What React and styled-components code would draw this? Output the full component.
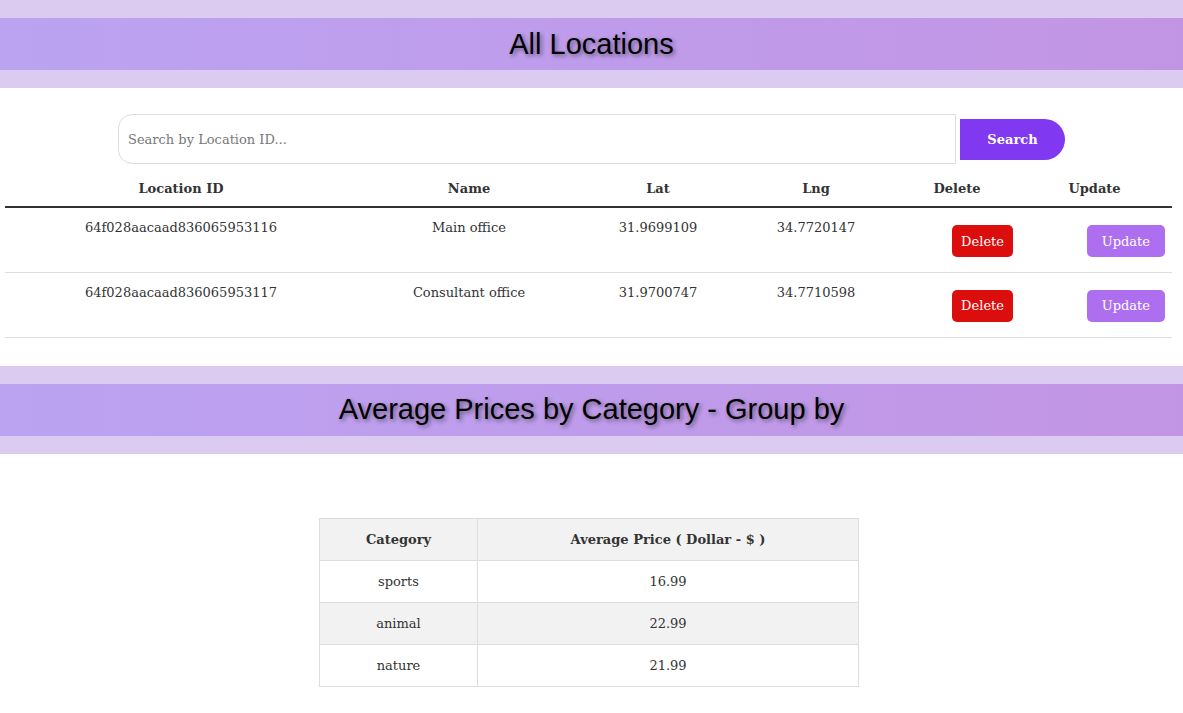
import React, { useState } from 'react';
import styled, { createGlobalStyle } from 'styled-components';

const GlobalStyle = createGlobalStyle`
  body {
    margin: 0;
    background: #fff;
    font-family: "DejaVu Serif", "Liberation Serif", serif;
    color: #333;
  }
`;

const SectionBand = styled.div`
  background: #dccbf0;
  padding: 18px 0;
`;

const SectionTitle = styled.h1`
  margin: 0;
  height: 52px;
  display: flex;
  align-items: center;
  justify-content: center;
  background: linear-gradient(90deg, #bba3f2 0%, #c295e4 100%);
  font-family: "Liberation Sans", Arial, sans-serif;
  font-weight: 400;
  font-size: 29px;
  color: #000;
  text-shadow: 2px 2px 4px rgba(0, 0, 0, 0.45);
`;

const SearchRow = styled.div`
  display: flex;
  align-items: center;
  justify-content: center;
  padding: 26px 0 10px 0;
  gap: 4px;
`;

const SearchInput = styled.input`
  width: 838px;
  height: 50px;
  box-sizing: border-box;
  border: 1px solid #ddd;
  border-radius: 14px 0 0 14px;
  padding: 0 9px;
  font-family: "DejaVu Serif", serif;
  font-size: 13px;
  color: #333;
  outline: none;

  &::placeholder {
    color: #777;
  }
`;

const SearchButton = styled.button`
  width: 105px;
  height: 41px;
  border: none;
  border-radius: 0 21px 21px 0;
  background: #8038f0;
  color: #fff;
  font-family: "DejaVu Serif", serif;
  font-weight: 700;
  font-size: 13px;
  cursor: pointer;
`;

const LocTable = styled.table`
  width: 1167px;
  margin: 0 0 28px 5px;
  border-collapse: collapse;
  font-size: 13px;
`;

const HeadCell = styled.th`
  font-weight: 700;
  padding: 7px 0 10px 0;
  border-bottom: 2px solid #333;
  text-align: center;
  width: ${p => p.$w}px;
`;

const Row = styled.tr`
  border-bottom: 1px solid #ddd;
`;

const Cell = styled.td`
  height: 65px;
  box-sizing: border-box;
  vertical-align: top;
  text-align: ${p => p.$align || 'center'};
  padding: 12px ${p => p.$pr || 0}px 0 0;
`;

const ActionButton = styled.button`
  margin-top: 5px;
  height: 32px;
  padding: 0 ${p => p.$px}px;
  border: none;
  border-radius: 5px;
  background: ${p => p.$bg};
  color: #fff;
  font-family: "DejaVu Serif", serif;
  font-size: 13px;
  cursor: pointer;
`;

const PriceWrap = styled.div`
  display: flex;
  justify-content: center;
  padding: 64px 5px 26px 0;
`;

const PriceTable = styled.table`
  width: 540px;
  border-collapse: collapse;
  font-size: 13px;
`;

const PriceTh = styled.th`
  height: 41px;
  padding: 0;
  border: 1px solid #ddd;
  background: #f2f2f2;
  font-weight: 700;
  width: ${p => p.$w}px;
`;

const PriceRow = styled.tr`
  background: ${p => (p.$alt ? '#f2f2f2' : '#fff')};
`;

const PriceTd = styled.td`
  height: 41px;
  padding: 0;
  border: 1px solid #ddd;
  text-align: center;
`;

const locations = [
  { id: '64f028aacaad836065953116', name: 'Main office', lat: '31.9699109', lng: '34.7720147' },
  { id: '64f028aacaad836065953117', name: 'Consultant office', lat: '31.9700747', lng: '34.7710598' },
];

const prices = [
  { category: 'sports', avg: '16.99' },
  { category: 'animal', avg: '22.99' },
  { category: 'nature', avg: '21.99' },
];

const App = () => {
  const [query, setQuery] = useState('');

  return (
    <>
      <GlobalStyle />
      <SectionBand>
        <SectionTitle>All Locations</SectionTitle>
      </SectionBand>

      <SearchRow>
        <SearchInput
          placeholder="Search by Location ID..."
          value={query}
          onChange={e => setQuery(e.target.value)}
        />
        <SearchButton>Search</SearchButton>
      </SearchRow>

      <LocTable>
        <thead>
          <tr>
            <HeadCell $w={352}>Location ID</HeadCell>
            <HeadCell $w={224}>Name</HeadCell>
            <HeadCell $w={154}>Lat</HeadCell>
            <HeadCell $w={162}>Lng</HeadCell>
            <HeadCell $w={120}>Delete</HeadCell>
            <HeadCell>Update</HeadCell>
          </tr>
        </thead>
        <tbody>
          {locations.map(loc => (
            <Row key={loc.id}>
              <Cell>{loc.id}</Cell>
              <Cell>{loc.name}</Cell>
              <Cell>{loc.lat}</Cell>
              <Cell>{loc.lng}</Cell>
              <Cell $align="right" $pr={4}>
                <ActionButton $bg="#dc0d0d" $px={9}>Delete</ActionButton>
              </Cell>
              <Cell $align="right" $pr={7}>
                <ActionButton $bg="#ad6ff0" $px={15}>Update</ActionButton>
              </Cell>
            </Row>
          ))}
        </tbody>
      </LocTable>

      <SectionBand>
        <SectionTitle>Average Prices by Category - Group by</SectionTitle>
      </SectionBand>

      <PriceWrap>
        <PriceTable>
          <thead>
            <tr>
              <PriceTh $w={157}>Category</PriceTh>
              <PriceTh>Average Price ( Dollar - $ )</PriceTh>
            </tr>
          </thead>
          <tbody>
            {prices.map((p, i) => (
              <PriceRow key={p.category} $alt={i % 2 === 1}>
                <PriceTd>{p.category}</PriceTd>
                <PriceTd>{p.avg}</PriceTd>
              </PriceRow>
            ))}
          </tbody>
        </PriceTable>
      </PriceWrap>
    </>
  );
};

export default App;
